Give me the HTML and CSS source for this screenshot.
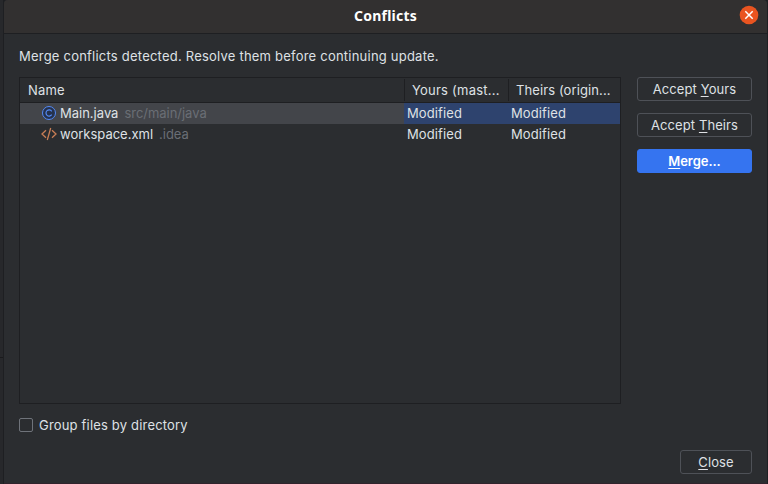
FILE: index.html
```html
<!DOCTYPE html>
<html lang="en">
<head>
<meta charset="utf-8">
<title>Conflicts</title>
<link rel="stylesheet" href="styles.css">
</head>
<body>
<div class="backdrop"><div class="pane"></div><div class="pane lower"></div></div>
<main class="dialog">
  <header class="titlebar">
    <h1 class="title">Conflicts</h1>
    <svg class="close-icon" width="20" height="20" viewBox="0 0 20 20"><circle cx="10" cy="10" r="9.3" fill="#e95420"/><path d="M6.3 6.3l7.4 7.4M13.7 6.3l-7.4 7.4" stroke="#fff" stroke-width="1.5"/></svg>
  </header>
  <p class="message">Merge conflicts detected. Resolve them before continuing update.</p>
  <div class="content">
    <section class="table">
      <div class="row head">
        <span class="th">Name</span><span class="th">Yours (mast...</span><span class="th">Theirs (origin...</span>
      </div>
      <div class="row selected">
        <span class="file">
          <svg class="icon" width="16" height="16" viewBox="0 0 16 16" fill="none"><circle cx="8" cy="8" r="6.5" fill="#25324d" stroke="#548af7"/><path d="M10.7 6.3A3.1 3.1 0 1 0 10.7 9.7" stroke="#548af7" stroke-width="1.2"/></svg>
          <span class="name">Main.java</span><span class="path">src/main/java</span>
        </span>
        <span class="cell">Modified</span><span class="cell">Modified</span>
      </div>
      <div class="row">
        <span class="file">
          <svg class="icon" width="16" height="16" viewBox="0 0 16 16" fill="none" stroke="#c77d55" stroke-width="1.3"><path d="M5 4.3L1 8l4 3.7M11 4.3L15 8l-4 3.7M9.7 2L6.3 14"/></svg>
          <span class="name wide">workspace.xml</span><span class="path">.idea</span>
        </span>
        <span class="cell">Modified</span><span class="cell">Modified</span>
      </div>
    </section>
    <div class="actions">
      <button class="button"><span>Accept <u>Y</u>ours</span></button>
      <button class="button"><span>Accept <u>T</u>heirs</span></button>
      <button class="button primary"><span><u>M</u>erge...</span></button>
    </div>
  </div>
  <label class="group"><span class="checkbox"></span><span>Group files by directory</span></label>
  <footer class="footer"><button class="button small"><span><u>C</u>lose</span></button></footer>
</main>
</body>
</html>
```

FILE: styles.css
```css
* { box-sizing: border-box; }
body {
  margin: 0;
  width: 768px;
  height: 484px;
  overflow: hidden;
  display: flex;
  background: #1e1f22;
  color: #dfe1e5;
  font: 13px/20px Inter, sans-serif;
  letter-spacing: 0.18px;
}
.backdrop {
  width: 3px;
  height: 484px;
  margin-right: 1px;
}
.pane { height: 358px; background: #27282b; border-bottom: 1px solid #1a1a1c; }
.pane.lower { height: 126px; border: 0; }
.dialog {
  width: 763px;
  height: 484px;
  display: flex;
  flex-direction: column;
  background: #2b2d30;
  border-bottom: 1px solid #30232c;
  border-radius: 4px 4px 0 0;
  overflow: hidden;
}
.titlebar {
  height: 34px;
  flex: none;
  display: flex;
  padding: 5px 8px 0 28px;
  background: #323030;
  border-bottom: 1px solid #1e1f22;
}
.title {
  flex: 1;
  margin: 0;
  padding-top: 1px;
  text-align: center;
  color: #fff;
  font: bold 14px/20px "Noto Sans", sans-serif;
  letter-spacing: 0.25px;
}
.message { margin: 12px 0 0 15px; height: 31px; white-space: nowrap; letter-spacing: 0.22px; }
.content { display: flex; gap: 16px; padding-left: 15px; }
.table { width: 602px; height: 327px; border: 1px solid #1e1f22; }
.row { display: grid; grid-template-columns: 384px 104px 112px; height: 21px; line-height: 21px; white-space: nowrap; }
.head { height: 25px; border-bottom: 1px solid #1e1f22; line-height: 24px; }
.th { height: 22px; margin-top: 1px; padding-left: 8px; line-height: 23px; }
.th + .th { border-left: 1px solid #1e1f22; padding-left: 7px; }
.th:nth-child(2) { letter-spacing: 0.23px; }
.th:last-child { letter-spacing: 0.1px; }
.selected { background: #2e436e; }
.selected .file { background: #43454a; }
.file { display: flex; align-items: center; padding-left: 21px; }
.icon { margin-right: 3px; position: relative; top: -0.5px; }
.name { letter-spacing: 0; }
.path { margin-left: 6px; color: #6a6e75; letter-spacing: -0.03px; }
.cell { padding-left: 3px; letter-spacing: 0.1px; }
.actions { display: flex; flex-direction: column; gap: 12px; }
.button {
  width: 115px;
  height: 24px;
  padding: 0;
  border: 1px solid #4e5157;
  border-radius: 3px;
  background: #2b2d30;
  color: inherit;
  font: inherit;
  letter-spacing: 0.1px;
}
.button u { text-decoration-thickness: 1px; text-underline-offset: 2px; text-decoration-skip-ink: none; }
.primary { background: #3574f0; border-color: #3574f0; color: #fff; font-weight: 600; letter-spacing: -0.05px; }
.group { display: flex; align-items: center; gap: 6px; height: 20px; margin: 11px 0 0 15px; }
.checkbox { width: 14px; height: 14px; border: 1px solid #6f737a; border-radius: 2px; }
.footer { display: flex; justify-content: flex-end; padding: 15px 15px 0 0; }
.small { width: 72px; }
```
